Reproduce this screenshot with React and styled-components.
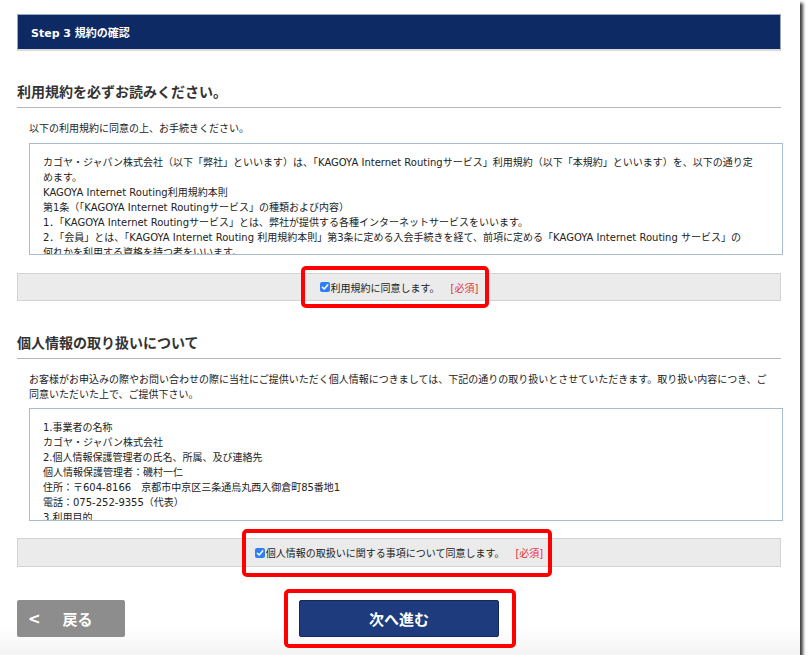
import React from "react";
import styled, { createGlobalStyle } from "styled-components";

const GlobalStyle = createGlobalStyle`
  body {
    margin: 0;
    background: #fff;
    font-family: "DejaVu Sans", "Noto Sans CJK JP", sans-serif;
    color: #333;
  }
`

const Frame = styled.div`
  width: 800px;
  height: 655px;
  box-sizing: border-box;
  padding: 14px 19px 0 17px;
  background: linear-gradient(to bottom, #fff 0, #fff 625px, #f4f4f4 655px);
  box-shadow: 3px 3px 3px rgba(0, 0, 0, 0.75);
  display: flex;
  flex-direction: column;
`

const StepBar = styled.div`
  height: 37px;
  box-sizing: border-box;
  background: #0d2a65;
  border: 1px solid #9aa8c4;
  border-bottom: 2px solid #dcdcdc;
  padding-left: 13px;
  display: flex;
  align-items: center;
  color: #fff;
  font-size: 11px;
  font-weight: bold;
`

const SectionTitle = styled.h2`
  margin: ${p => p.$top}px 0 0;
  font-size: 14px;
  line-height: 20px;
  font-weight: bold;
  color: #333;
  padding-bottom: 5px;
  border-bottom: 1px solid #b8b8b8;
`

const Lead = styled.p`
  margin: 13px 0 0 12px;
  font-size: 10px;
  line-height: 15px;
  color: #222;
`

const TermsBox = styled.div`
  margin: ${p => p.$top}px 0 0 12px;
  width: 754px;
  height: ${p => p.$height}px;
  box-sizing: border-box;
  border: 1px solid #a9bccf;
  padding: 11px 13px;
  overflow: hidden;
  font-size: 10px;
  line-height: 15px;
  color: #222;
`

const TermsLine = styled.div`
  white-space: nowrap;
`

const AgreeBar = styled.div`
  margin-top: ${p => p.$top}px;
  height: ${p => p.$height}px;
  box-sizing: border-box;
  background: #ebebeb;
  border: 1px solid #d3d3d3;
  display: flex;
  justify-content: center;
`

const AgreeLabel = styled.label`
  position: relative;
  display: flex;
  align-items: center;
  font-size: 10px;
  color: #222;
`

const CheckMark = styled.span`
  width: 10px;
  height: 10px;
  border-radius: 2px;
  background: #2f7ff4;
  margin-right: 1px;
  display: flex;
  align-items: center;
  justify-content: center;
`

const Required = styled.span`
  color: #e5323b;
  margin-left: 11px;
`

const Highlight = styled.span`
  position: absolute;
  top: ${p => p.$t}px;
  bottom: ${p => p.$b}px;
  left: ${p => p.$l}px;
  right: ${p => p.$r}px;
  border: 4px solid #ff0000;
  border-radius: 5px;
  pointer-events: none;
`

const ButtonRow = styled.div`
  margin-top: 33px;
  display: grid;
  grid-template-columns: 1fr auto 1fr;
  align-items: center;
`

const BackButton = styled.button`
  justify-self: start;
  width: 108px;
  height: 37px;
  border: none;
  border-radius: 2px;
  background: #8d8d8d;
  color: #fff;
  font-family: inherit;
  font-size: 15px;
  font-weight: bold;
  padding: 0 0 0 11px;
  display: flex;
  align-items: center;
  gap: 22px;
`

const NextWrap = styled.div`
  position: relative;
`

const NextButton = styled.button`
  width: 200px;
  height: 37px;
  border: 1px solid #13295a;
  border-radius: 2px;
  background: #1d3b7d;
  color: #fff;
  font-family: inherit;
  font-size: 15px;
  font-weight: bold;
  display: flex;
  align-items: center;
  justify-content: center;
`

function Check() {
  return (
    <CheckMark>
      <svg width="8" height="8" viewBox="0 0 8 8">
        <polyline points="1.4,4.2 3.2,6 6.7,1.9" fill="none" stroke="#fff" strokeWidth="1.5" strokeLinecap="round" strokeLinejoin="round" />
      </svg>
    </CheckMark>
  )
}

const terms = [
  "カゴヤ・ジャパン株式会社（以下「弊社」といいます）は、「KAGOYA Internet Routingサービス」利用規約（以下「本規約」といいます）を、以下の通り定",
  "めます。",
  "KAGOYA Internet Routing利用規約本則",
  "第1条（「KAGOYA Internet Routingサービス」の種類および内容）",
  "1．「KAGOYA Internet Routingサービス」とは、弊社が提供する各種インターネットサービスをいいます。",
  "2．「会員」とは、「KAGOYA Internet Routing 利用規約本則」第3条に定める入会手続きを経て、前項に定める「KAGOYA Internet Routing サービス」の",
  "何れかを利用する資格を持つ者をいいます。",
  "3．本規約は、弊社と会員との間の一切の関係に適用されます。",
]

const privacy = [
  "1.事業者の名称",
  "カゴヤ・ジャパン株式会社",
  "2.個人情報保護管理者の氏名、所属、及び連絡先",
  "個人情報保護管理者：磯村一仁",
  "住所：〒604-8166　京都市中京区三条通烏丸西入御倉町85番地1",
  "電話：075-252-9355（代表）",
  "3.利用目的",
  "お客様の個人情報は、以下の目的で利用いたします。",
]

export default function App() {
  return (
    <>
      <GlobalStyle />
      <Frame>
        <StepBar>Step 3 規約の確認</StepBar>

        <SectionTitle $top={31}>利用規約を必ずお読みください。</SectionTitle>
        <Lead>以下の利用規約に同意の上、お手続きください。</Lead>
        <TermsBox $top={7} $height={112}>
          {terms.map((t, i) => <TermsLine key={i}>{t}</TermsLine>)}
        </TermsBox>
        <AgreeBar $top={18} $height={28}>
          <AgreeLabel>
            <Check />
            利用規約に同意します。
            <Required>[必須]</Required>
            <Highlight $t={-8} $b={-8} $l={-19} $r={-11} />
          </AgreeLabel>
        </AgreeBar>

        <SectionTitle $top={32}>個人情報の取り扱いについて</SectionTitle>
        <Lead>
          お客様がお申込みの際やお問い合わせの際に当社にご提供いただく個人情報につきましては、下記の通りの取り扱いとさせていただきます。取り扱い内容につき、ご<br />
          同意いただいた上で、ご提供下さい。
        </Lead>
        <TermsBox $top={6} $height={113}>
          {privacy.map((t, i) => <TermsLine key={i}>{t}</TermsLine>)}
        </TermsBox>
        <AgreeBar $top={17} $height={29}>
          <AgreeLabel>
            <Check />
            個人情報の取扱いに関する事項について同意します。
            <Required>[必須]</Required>
            <Highlight $t={-10} $b={-11} $l={-13} $r={-9} />
          </AgreeLabel>
        </AgreeBar>

        <ButtonRow>
          <BackButton>
            <span>&lt;</span>
            <span>戻る</span>
          </BackButton>
          <NextWrap>
            <NextButton>次へ進む</NextButton>
            <Highlight $t={-11} $b={-11} $l={-15} $r={-17} />
          </NextWrap>
        </ButtonRow>
      </Frame>
    </>
  )
}
